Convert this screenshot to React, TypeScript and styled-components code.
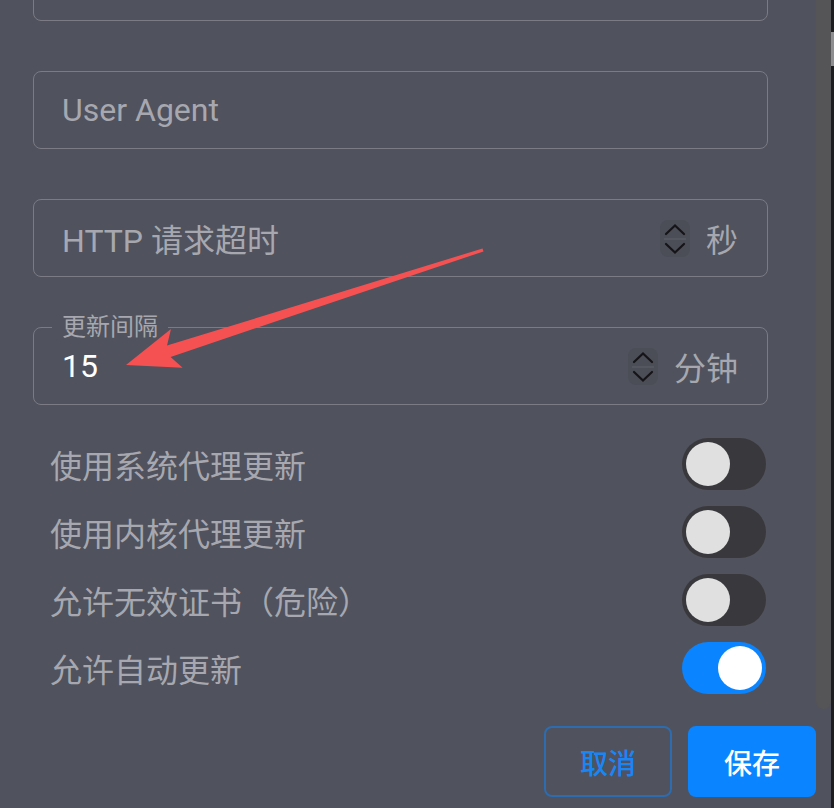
import React from 'react';
import styled, { createGlobalStyle } from 'styled-components';

const GlobalStyle = createGlobalStyle`
  html, body {
    margin: 0;
    padding: 0;
    overflow: hidden;
    background: #50525d;
  }
  * {
    box-sizing: border-box;
  }
`;

const PANEL = '#50525d';
const MUTED = '#a7a8af';

const SpinnerIcon: React.FC = () => (
  <SpinBox>
    <svg width="30" height="37" viewBox="0 0 30 37">
      <path d="M6 14 L15 5.5 L24 14" fill="none" stroke="#151518" strokeWidth="2.2" strokeLinecap="round" />
      <line x1="4" y1="19" x2="26" y2="19" stroke="#5e606a" strokeWidth="1" />
      <path d="M6 24 L15 32.5 L24 24" fill="none" stroke="#151518" strokeWidth="2.2" strokeLinecap="round" />
    </svg>
  </SpinBox>
);

interface ToggleProps {
  on?: boolean;
}

const Toggle: React.FC<ToggleProps> = ({ on }) => (
  <Track on={on}>
    <Thumb on={on} />
  </Track>
);

const switches = [
  { label: '使用系统代理更新', on: false },
  { label: '使用内核代理更新', on: false },
  { label: '允许无效证书（危险）', on: false },
  { label: '允许自动更新', on: true },
];

const App: React.FC = () => {
  return (
    <Screen>
      <GlobalStyle />
      <Dialog>
        <ScrollArea>
          <Content>
            <Field cut />
            <Field>
              <Placeholder>User Agent</Placeholder>
            </Field>
            <Field>
              <Placeholder>HTTP 请求超时</Placeholder>
              <SpinnerIcon />
              <Unit>秒</Unit>
            </Field>
            <Field>
              <FloatLabel>更新间隔</FloatLabel>
              <Value>15</Value>
              <SpinnerIcon />
              <Unit>分钟</Unit>
            </Field>
            <SwitchList>
              {switches.map((s) => (
                <SwitchRow key={s.label}>
                  <SwitchLabel>{s.label}</SwitchLabel>
                  <Toggle on={s.on} />
                </SwitchRow>
              ))}
            </SwitchList>
          </Content>
          <InnerScrollbar />
        </ScrollArea>
        <Actions>
          <Button variant="outlined">取消</Button>
          <Button variant="contained">保存</Button>
        </Actions>
      </Dialog>
      <PageScrollbar>
        <PageThumb />
      </PageScrollbar>
      <Annotation width="834" height="808" viewBox="0 0 834 808">
        <polygon
          points="126,365 171,329 167,345.5 482.5,248.5 483.5,251.4 170.6,356.9 182.6,367.7"
          fill="#f65152"
          strokeLinejoin="round"
        />
      </Annotation>
    </Screen>
  );
};

const Screen = styled.div`
  position: relative;
  display: flex;
  width: 834px;
  height: 808px;
  overflow: hidden;
  font-family: 'Roboto', 'Noto Sans CJK SC', sans-serif;
`;

const Dialog = styled.div`
  flex: 1;
  display: flex;
  flex-direction: column;
  background: ${PANEL};
`;

const ScrollArea = styled.div`
  display: flex;
  height: 709px;
  overflow: hidden;
`;

const Content = styled.div`
  flex: 1;
  display: flex;
  flex-direction: column;
  gap: 50px;
  margin-top: -57px;
  padding: 0 48px 0 33px;
`;

const InnerScrollbar = styled.div`
  width: 15px;
  height: 100%;
  background: #555557;
  border-radius: 0 0 8px 8px;
`;

const Field = styled.div<{ cut?: boolean }>`
  position: relative;
  display: flex;
  align-items: center;
  gap: 16px;
  height: 78px;
  padding: 0 29px 0 28px;
  border: 1px solid #7a7b84;
  border-radius: 8px;
  flex-shrink: 0;
`;

const Placeholder = styled.span`
  flex: 1;
  font-size: 32px;
  color: ${MUTED};
  white-space: nowrap;
`;

const Value = styled.span`
  flex: 1;
  font-size: 32px;
  color: #ffffff;
`;

const FloatLabel = styled.span`
  position: absolute;
  left: 18px;
  top: -17px;
  padding: 0 10px;
  background: ${PANEL};
  font-size: 24px;
  line-height: 32px;
  color: ${MUTED};
`;

const Unit = styled.span`
  font-size: 32px;
  color: ${MUTED};
`;

const SpinBox = styled.div`
  display: flex;
  width: 30px;
  height: 37px;
  border-radius: 8px;
  background: #4b4d57;
`;

const SwitchList = styled.div`
  display: flex;
  flex-direction: column;
  margin-top: -25px;
  padding: 0 2px 0 17px;
`;

const SwitchRow = styled.div`
  display: flex;
  align-items: center;
  justify-content: space-between;
  height: 68px;
`;

const SwitchLabel = styled.span`
  font-size: 32px;
  color: ${MUTED};
`;

const Track = styled.div<{ on?: boolean }>`
  display: flex;
  justify-content: ${(p) => (p.on ? 'flex-end' : 'flex-start')};
  width: 84px;
  height: 52px;
  padding: 4px;
  border-radius: 26px;
  background: ${(p) => (p.on ? '#0a84ff' : '#39393d')};
`;

const Thumb = styled.div<{ on?: boolean }>`
  width: 44px;
  height: 44px;
  border-radius: 50%;
  background: ${(p) => (p.on ? '#ffffff' : '#e0e0e0')};
`;

const Actions = styled.div`
  flex: 1;
  display: flex;
  justify-content: flex-end;
  align-items: flex-start;
  gap: 16px;
  padding: 17px 15px 0 0;
`;

const Button = styled.button<{ variant: 'outlined' | 'contained' }>`
  width: 128px;
  height: 71px;
  border-radius: 8px;
  font-family: inherit;
  font-size: 28px;
  font-weight: 500;
  cursor: pointer;
  border: 2px solid ${(p) => (p.variant === 'outlined' ? '#2d6cae' : '#0a84ff')};
  background: ${(p) => (p.variant === 'outlined' ? 'transparent' : '#0a84ff')};
  color: ${(p) => (p.variant === 'outlined' ? '#1a86f5' : '#ffffff')};
`;

const PageScrollbar = styled.div`
  width: 3px;
  height: 100%;
  background: #1d1d20;
  padding-top: 32px;
`;

const PageThumb = styled.div`
  width: 3px;
  height: 34px;
  background: #8e8e90;
`;

const Annotation = styled.svg`
  position: absolute;
  left: 0;
  top: 0;
  pointer-events: none;
`;

export default App;
